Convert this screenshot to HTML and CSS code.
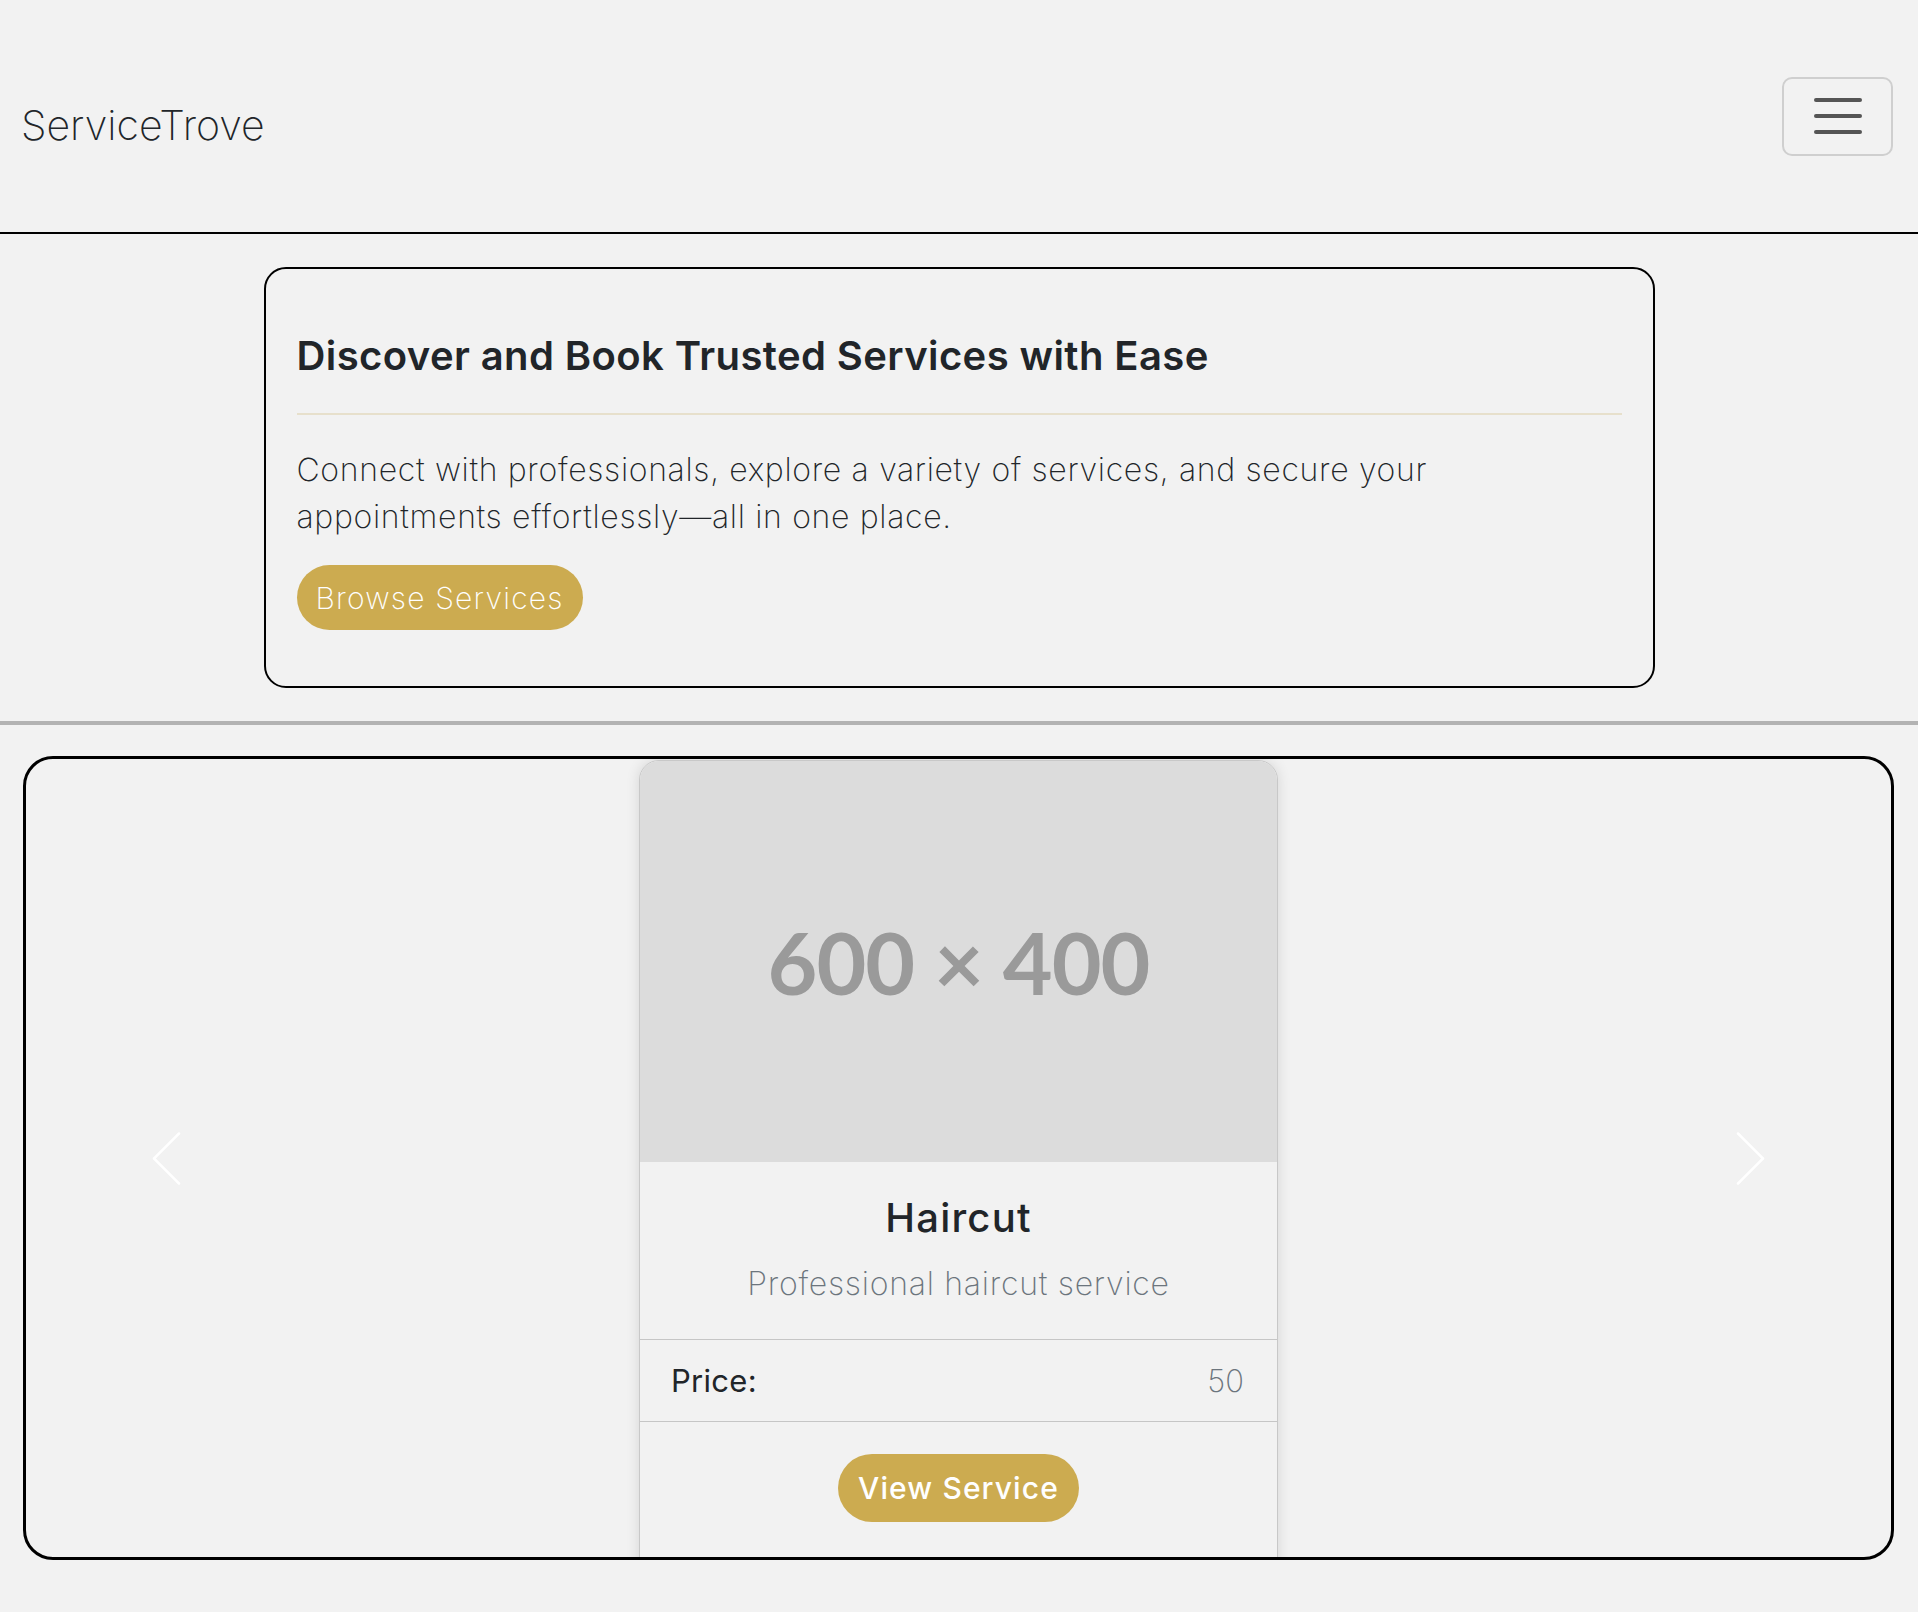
FILE: index.html
```html
<!DOCTYPE html>
<html lang="en">
<head>
<meta charset="utf-8">
<title>ServiceTrove</title>
<link rel="stylesheet" href="styles.css">
</head>
<body>
<header class="navbar">
  <a class="brand" href="#">ServiceTrove</a>
  <button class="toggler" type="button" aria-label="Toggle navigation">
    <span class="bar"></span><span class="bar"></span><span class="bar"></span>
  </button>
</header>

<section class="hero-wrap">
  <div class="hero">
    <h1 class="hero-title">Discover and Book Trusted Services with Ease</h1>
    <hr class="hero-rule">
    <p class="hero-text">Connect with professionals, explore a variety of services, and secure your appointments effortlessly—all in one place.</p>
    <a class="btn btn-browse" href="#">Browse Services</a>
  </div>
</section>

<hr class="section-rule">

<section class="carousel">
  <div class="slide">
    <div class="card">
      <div class="card-img"><span>600 × 400</span></div>
      <div class="card-body">
        <h2 class="card-title">Haircut</h2>
        <p class="card-text">Professional haircut service</p>
      </div>
      <div class="card-row">
        <span class="row-label">Price:</span>
        <span class="row-value">50</span>
      </div>
      <div class="card-footer">
        <a class="btn btn-view" href="#">View Service</a>
      </div>
    </div>
  </div>
  <button class="ctrl ctrl-prev" type="button" aria-label="Previous">
    <svg width="30" height="53" viewBox="0 0 30 53"><path d="M28 1.5 L3 26.5 L28 51.5" fill="none" stroke="#ffffff" stroke-width="2.5" stroke-linecap="round" stroke-linejoin="round"/></svg>
  </button>
  <button class="ctrl ctrl-next" type="button" aria-label="Next">
    <svg width="30" height="53" viewBox="0 0 30 53"><path d="M2 1.5 L27 26.5 L2 51.5" fill="none" stroke="#ffffff" stroke-width="2.5" stroke-linecap="round" stroke-linejoin="round"/></svg>
  </button>
</section>
</body>
</html>
```

FILE: styles.css
```css
* { box-sizing: border-box; }

body {
  margin: 0;
  background: #f2f2f2;
  font-family: Inter, "Noto Sans", sans-serif;
  color: #212529;
}

.navbar {
  height: 234px;
  display: flex;
  align-items: center;
  justify-content: space-between;
  padding: 0 25px 0 21px;
  border-bottom: 2px solid #000;
}

.brand {
  font-size: 41px;
  font-weight: 200;
  color: #212529;
  text-decoration: none;
  line-height: 1.5;
  padding-top: 19px;
}

.toggler {
  width: 111px;
  height: 79px;
  border: 2px solid #cfcfcf;
  border-radius: 10px;
  background: transparent;
  display: flex;
  flex-direction: column;
  align-items: center;
  justify-content: center;
  gap: 12px;
  padding: 0;
}

.toggler .bar {
  display: block;
  width: 48px;
  height: 4px;
  border-radius: 2px;
  background: #555;
}

.hero-wrap {
  padding: 33px 0 0;
}

.hero {
  width: 1391px;
  margin: 0 auto;
  border: 2px solid #000;
  border-radius: 22px;
  padding: 63px 31px 56px 31px;
}

.hero-title {
  margin: 0;
  font-size: 40px;
  font-weight: 600;
  line-height: 48px;
  color: #212529;
  letter-spacing: 0.4px;
}

.hero-rule {
  margin: 33px 0 31px;
  border: 0;
  border-top: 2px solid #e7e0cc;
}

.hero-text {
  margin: 0 0 25px;
  font-size: 32px;
  font-weight: 200;
  line-height: 47px;
  color: #212529;
  letter-spacing: 0.67px;
}

.btn {
  display: inline-flex;
  align-items: center;
  justify-content: center;
  background: #ccab50;
  color: #fff;
  text-decoration: none;
  border-radius: 34px;
}

.btn-browse {
  height: 65px;
  padding: 0 19px;
  font-size: 30px;
  font-weight: 200;
  letter-spacing: 1.2px;
}

.section-rule {
  margin: 33px 0 0;
  border: 0;
  border-top: 4px solid #b3b3b3;
}

.carousel {
  position: relative;
  margin: 31px 24px 0 23px;
  height: 804px;
  border: 3px solid #000;
  border-radius: 30px;
  overflow: hidden;
}

.slide {
  display: flex;
  justify-content: center;
  padding-top: 1px;
  height: 100%;
}

.card {
  width: 639px;
  height: 830px;
  flex: none;
  border: 1px solid #c8c8c8;
  border-radius: 20px;
  overflow: hidden;
  box-shadow: 0 0 14px rgba(0, 0, 0, 0.12);
  background: #f2f2f2;
  display: flex;
  flex-direction: column;
}

.card-img {
  height: 401px;
  flex: none;
  background: #dcdcdc;
  display: flex;
  align-items: center;
  justify-content: center;
}

.card-img span {
  font-family: Lato, "Open Sans", sans-serif;
  font-weight: 700;
  font-size: 86px;
  color: #9a9a9a;
  letter-spacing: -1px;
}

.card-body {
  height: 177px;
  flex: none;
  text-align: center;
  padding-top: 32px;
}

.card-title {
  margin: 0;
  font-size: 40px;
  font-weight: 500;
  line-height: 48px;
  color: #212529;
  letter-spacing: 1.2px;
}

.card-text {
  margin: 18px 0 0;
  font-size: 32px;
  font-weight: 200;
  line-height: 48px;
  color: #6c757d;
  letter-spacing: 0.75px;
}

.card-row {
  flex: none;
  height: 83px;
  border-top: 1px solid #c6c6c6;
  border-bottom: 1px solid #c6c6c6;
  display: flex;
  align-items: center;
  justify-content: space-between;
  padding: 0 33px 0 31px;
  font-size: 31px;
}

.row-label { font-weight: 400; color: #212529; letter-spacing: 0.3px; }
.row-value { font-weight: 200; color: #6c757d; }

.card-footer {
  flex: 1;
  display: flex;
  justify-content: center;
  align-items: flex-start;
  padding-top: 32px;
}

.btn-view {
  height: 68px;
  padding: 0 20px;
  font-size: 30px;
  font-weight: 500;
  letter-spacing: 1.1px;
}

.ctrl {
  position: absolute;
  top: 0;
  bottom: 0;
  width: 15%;
  border: 0;
  background: transparent;
  padding: 0;
  display: flex;
  align-items: center;
  justify-content: center;
}

.ctrl-prev { left: 0; }
.ctrl-next { right: 0; }
```
